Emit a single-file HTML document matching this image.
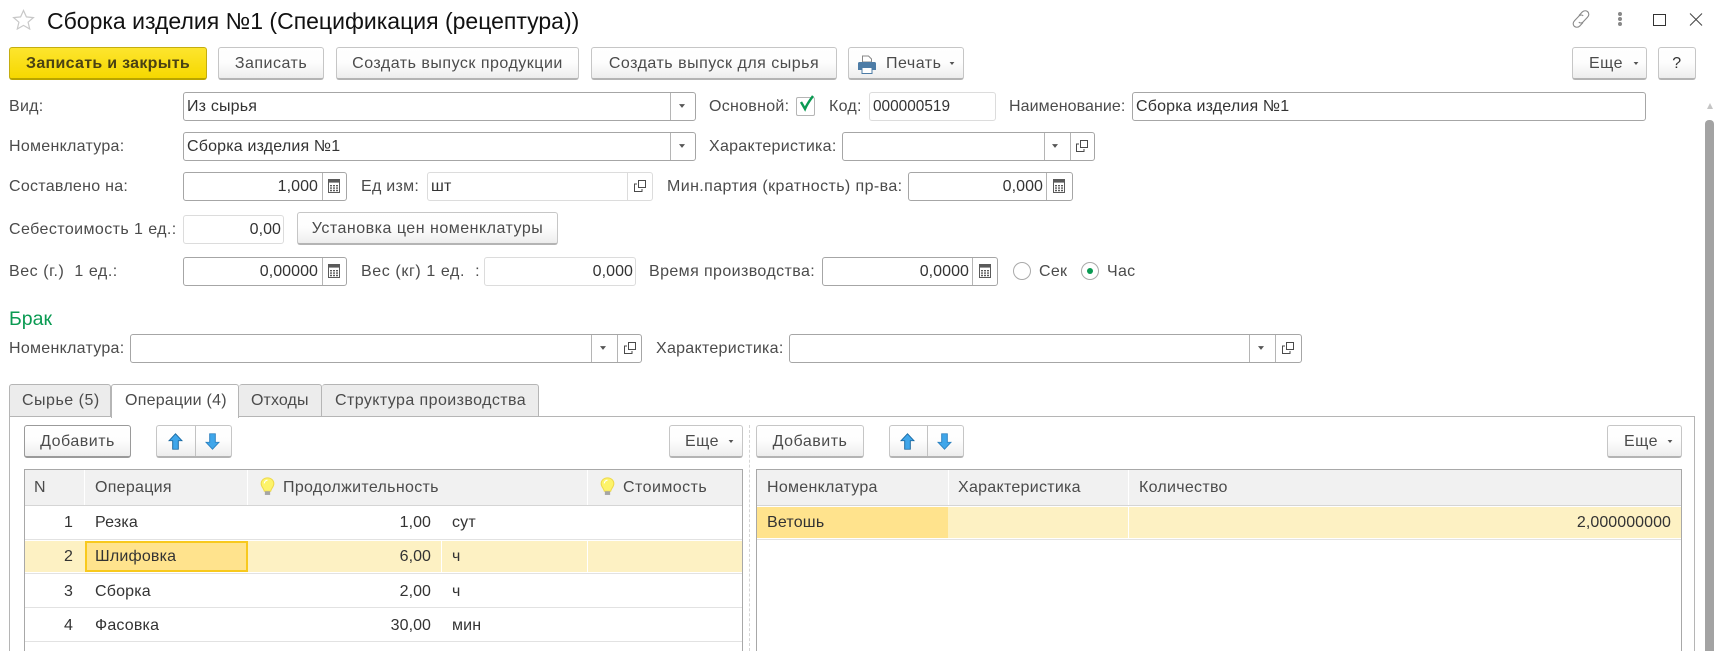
<!DOCTYPE html>
<html lang="ru"><head><meta charset="utf-8"><title>Сборка изделия №1</title>
<style>
html,body{margin:0;padding:0;width:1714px;height:651px;overflow:hidden;background:#fff}
body{position:relative;font-family:"Liberation Sans",Arial,sans-serif;font-size:16px;letter-spacing:.28px;color:#4b4b4b}
.a,.l,.f,.b,.t,.c,svg{position:absolute}
.l,.t{white-space:nowrap;line-height:22px;height:22px}
.t{color:#333;letter-spacing:.18px}
.t.r{letter-spacing:.06px}
.r{text-align:right}
.f{box-sizing:border-box;height:29px;background:#fff;border:1px solid #a6a6a6;border-radius:3px}
.f.lt{border-color:#dcdcdc}
.f i{position:absolute;top:0;bottom:0;width:1px;background:#b5b5b5}
.f.lt i{background:#dcdcdc}
.b{box-sizing:border-box;height:33px;top:47px;border:1px solid #c6c6c6;border-bottom:2px solid #b4b4b4;border-radius:3px;background:linear-gradient(#fff 0,#fdfdfd 50%,#ededed 100%);text-align:center;line-height:32px;white-space:nowrap;color:#4b4b4b;letter-spacing:.5px}
.y{background:linear-gradient(#fde52e,#f6d800);border:1px solid #c4ad10;border-bottom:2px solid #b9a400;font-weight:bold;color:#4a4213;letter-spacing:.3px}
.tab{position:absolute;box-sizing:border-box;top:384px;height:33px;background:#ececec;border:1px solid #b5b5b5;border-left:0;border-radius:3px 3px 0 0;line-height:31px;color:#4b4b4b;white-space:nowrap;letter-spacing:.42px}
.h{position:absolute;background:#e2e2e2;height:1px}
.hd{position:absolute;background:#f1f1f1;height:35px;top:470px}
.v{position:absolute;background:#fff;width:1px}
</style></head><body>
<svg width="0" height="0" style="left:0;top:0"><defs>
<symbol id="calc" viewBox="0 0 12 14"><rect x=".5" y=".5" width="11" height="13" fill="#fff" stroke="#5a5a5a"/><rect x="0" y="0" width="12" height="3.6" fill="#5a5a5a"/><path d="M2 6h2v1.4H2zM5 6h2v1.4H5zM8 6h2v1.4H8zM2 8.4h2v1.4H2zM5 8.4h2v1.4H5zM8 8.4h2v1.4H8zM2 10.8h2v1.4H2zM5 10.8h2v1.4H5zM8 10.8h2v1.4H8z" fill="#5a5a5a"/></symbol>
<symbol id="copy" viewBox="0 0 12 12"><path d="M4.5.5h7v7h-7z M3 4H.5v7.500H8V9" fill="none" stroke="#4a4a4a"/></symbol>
<symbol id="dd" viewBox="0 0 8 5"><path d="M0 0h8L4 5z" fill="#555"/></symbol>
<symbol id="up" viewBox="0 0 16 22"><path d="M8 1L15 10H11V21H5V10H1z" fill="#3fa6ea" stroke="#16669f"/></symbol>
<symbol id="dn" viewBox="0 0 16 22"><path d="M5 1H11V12H15L8 21 1 12H5z" fill="#3fa6ea" stroke="#2a7fbe"/></symbol>
<symbol id="bulb" viewBox="0 0 14 18"><path d="M7 .8C3.3.8 1 3.4 1 6.4c0 2.8 2.4 4.200 3 7.100h6c.6-2.900 3-4.300 3-7.100C13 3.400 10.700.8 7 .8z" fill="#fdf36a" stroke="#eed94a"/><path d="M4 6a3 3 0 013-3" stroke="#fff" fill="none"/><rect x="4.500" y="13.500" width="5" height="3.500" fill="#a5a5a5"/></symbol>
</defs></svg>

<svg style="left:12px;top:9px" width="23" height="21" viewBox="0 0 23 21"><path d="M11.500 1.500l2.900 6.400 7 .7-5.300 4.600 1.600 6.800-6.200-3.600-6.200 3.600 1.600-6.800L1.600 8.600l7-.7z" fill="#fff" stroke="#c8c8c8" stroke-width="1.200"/></svg>
<div class="l" style="left:47px;top:7px;height:28px;line-height:28px;font-size:23px;letter-spacing:0;color:#111">Сборка изделия №1 (Спецификация (рецептура))</div>

<svg style="left:1570px;top:8px" width="22" height="22" viewBox="0 0 22 22"><g fill="none" stroke="#888" stroke-width="1.100"><path d="M9 7.500l3-3.300c2-2 4.500-1.700 5.800-.4 1.300 1.300 1.500 3.600-.3 5.500l-4.500 4.700c-1.500 1.400-3.200 1.200-4.200.1"/><path d="M13 14.500l-3 3.300c-2 2-4.500 1.700-5.800.4-1.300-1.300-1.500-3.600.3-5.500l4.500-4.700c1.500-1.400 3.200-1.200 4.200-.1"/></g></svg>
<svg style="left:1617px;top:11px" width="6" height="16"><circle cx="3" cy="3" r="2" fill="#888"/><circle cx="3" cy="8" r="2" fill="#888"/><circle cx="3" cy="13" r="2" fill="#888"/></svg>
<div class="a" style="left:1653px;top:14px;width:11px;height:10px;border:1px solid #333"></div>
<svg style="left:1689px;top:13px" width="14" height="13"><path d="M1 .5l12 12M13 .5L1 12.500" stroke="#444" fill="none"/></svg>

<div class="b y" style="left:9px;width:198px">Записать и закрыть</div>
<div class="b" style="left:218px;width:106px">Записать</div>
<div class="b" style="left:336px;width:243px">Создать выпуск продукции</div>
<div class="b" style="left:591px;width:246px">Создать выпуск для сырья</div>
<div class="b" style="left:848px;width:116px;text-align:left;padding-left:37px">Печать</div>
<svg style="left:857px;top:55px" width="20" height="19" viewBox="0 0 20 19"><path d="M5.500 7V1h6l3 3v3z" fill="#fff" stroke="#888"/><path d="M1 8.500c0-1 .6-1.500 1.500-1.500h15c.9 0 1.500.5 1.500 1.500V15h-4v-3H5v3H1z" fill="#4d7ca6"/><rect x="5" y="12.500" width="10" height="6" fill="#fff" stroke="#4d7ca6"/></svg>
<svg style="left:949px;top:62px" width="6" height="3"><use href="#dd"/></svg>
<div class="b" style="left:1572px;width:75px;text-align:left;padding-left:16px">Еще</div>
<svg style="left:1633px;top:62px" width="6" height="3"><use href="#dd"/></svg>
<div class="b" style="left:1658px;width:38px;color:#333">?</div>

<!-- row 1 -->
<div class="l" style="left:9px;top:96px">Вид:</div>
<div class="f" style="left:183px;top:92px;width:513px"><i style="left:486px"></i></div>
<div class="t" style="left:187px;top:96px">Из сырья</div>
<svg style="left:679px;top:104px" width="6" height="4"><use href="#dd"/></svg>
<div class="l" style="left:709px;top:96px">Основной:</div>
<div class="a" style="left:796px;top:97px;width:17px;height:17px;border:1px solid #b5b5b5;border-radius:2px"></div>
<svg style="left:798px;top:94px" width="18" height="18"><path d="M3 8l4 7c2-5 5-9 8-13" stroke="#0a9a52" stroke-width="2.400" fill="none"/></svg>
<div class="l" style="left:829px;top:96px">Код:</div>
<div class="f lt" style="left:869px;top:92px;width:127px"></div>
<div class="t" style="left:873px;top:96px;font-size:15.4px;letter-spacing:0">000000519</div>
<div class="l" style="left:1009px;top:96px;letter-spacing:.08px">Наименование:</div>
<div class="f" style="left:1132px;top:92px;width:514px"></div>
<div class="t" style="left:1136px;top:96px">Сборка изделия №1</div>

<!-- row 2 -->
<div class="l" style="left:9px;top:136px">Номенклатура:</div>
<div class="f" style="left:183px;top:132px;width:513px"><i style="left:486px"></i></div>
<div class="t" style="left:187px;top:136px">Сборка изделия №1</div>
<svg style="left:679px;top:144px" width="6" height="4"><use href="#dd"/></svg>
<div class="l" style="left:709px;top:136px">Характеристика:</div>
<div class="f" style="left:842px;top:132px;width:253px"><i style="left:201px"></i><i style="left:227px"></i></div>
<svg style="left:1052px;top:144px" width="6" height="4"><use href="#dd"/></svg>
<svg style="left:1076px;top:140px" width="12" height="12"><use href="#copy"/></svg>

<!-- row 3 -->
<div class="l" style="left:9px;top:176px">Составлено на:</div>
<div class="f" style="left:183px;top:172px;width:164px"><i style="left:138px"></i></div>
<div class="t r" style="left:183px;top:176px;width:135px">1,000</div>
<svg style="left:328px;top:179px" width="12" height="14"><use href="#calc"/></svg>
<div class="l" style="left:361px;top:176px">Ед изм:</div>
<div class="f lt" style="left:427px;top:172px;width:226px"><i style="left:199px"></i></div>
<div class="t" style="left:431px;top:176px">шт</div>
<svg style="left:634px;top:180px" width="12" height="12"><use href="#copy"/></svg>
<div class="l" style="left:667px;top:176px;letter-spacing:.4px">Мин.партия (кратность) пр-ва:</div>
<div class="f" style="left:908px;top:172px;width:165px"><i style="left:137px"></i></div>
<div class="t r" style="left:908px;top:176px;width:135px">0,000</div>
<svg style="left:1053px;top:179px" width="12" height="14"><use href="#calc"/></svg>

<!-- row 4 -->
<div class="l" style="left:9px;top:219px;letter-spacing:.42px">Себестоимость 1 ед.:</div>
<div class="f lt" style="left:183px;top:215px;width:101px"></div>
<div class="t r" style="left:183px;top:219px;width:98px">0,00</div>
<div class="b" style="left:297px;top:212px;width:261px">Установка цен номенклатуры</div>

<!-- row 5 -->
<div class="l" style="left:9px;top:261px;letter-spacing:.55px">Вес (г.)&nbsp; 1 ед.:</div>
<div class="f" style="left:183px;top:257px;width:164px"><i style="left:138px"></i></div>
<div class="t r" style="left:183px;top:261px;width:135px">0,00000</div>
<svg style="left:328px;top:264px" width="12" height="14"><use href="#calc"/></svg>
<div class="l" style="left:361px;top:261px;letter-spacing:.6px">Вес (кг) 1 ед.&nbsp; :</div>
<div class="f lt" style="left:484px;top:257px;width:152px"></div>
<div class="t r" style="left:484px;top:261px;width:149px">0,000</div>
<div class="l" style="left:649px;top:261px;letter-spacing:.4px">Время производства:</div>
<div class="f" style="left:822px;top:257px;width:176px"><i style="left:149px"></i></div>
<div class="t r" style="left:822px;top:261px;width:147px">0,0000</div>
<svg style="left:979px;top:264px" width="12" height="14"><use href="#calc"/></svg>
<svg style="left:1013px;top:262px" width="18" height="18"><circle cx="9" cy="9" r="8.500" fill="#fff" stroke="#aaa"/></svg>
<div class="l" style="left:1039px;top:261px">Сек</div>
<svg style="left:1081px;top:262px" width="18" height="18"><circle cx="9" cy="9" r="8.500" fill="#fff" stroke="#aaa"/><circle cx="9" cy="9" r="3" fill="#0a9a52"/></svg>
<div class="l" style="left:1107px;top:261px">Час</div>

<!-- brak -->
<div class="l" style="left:9px;top:308px;font-size:19.500px;letter-spacing:0;color:#0a9a52">Брак</div>
<div class="l" style="left:9px;top:338px">Номенклатура:</div>
<div class="f" style="left:130px;top:334px;width:512px"><i style="left:460px"></i><i style="left:486px"></i></div>
<svg style="left:600px;top:346px" width="6" height="4"><use href="#dd"/></svg>
<svg style="left:624px;top:342px" width="12" height="12"><use href="#copy"/></svg>
<div class="l" style="left:656px;top:338px">Характеристика:</div>
<div class="f" style="left:789px;top:334px;width:513px"><i style="left:459px"></i><i style="left:485px"></i></div>
<svg style="left:1258px;top:346px" width="6" height="4"><use href="#dd"/></svg>
<svg style="left:1282px;top:342px" width="12" height="12"><use href="#copy"/></svg>

<!-- tabs -->
<div class="a" style="left:9px;top:416px;width:1686px;height:240px;box-sizing:border-box;border:1px solid #b5b5b5;background:#fff"></div>
<div class="tab" style="left:9px;width:102px;border-left:1px solid #b5b5b5;padding-left:12px;letter-spacing:.5px">Сырье (5)</div>
<div class="tab" style="left:111px;width:128px;background:#fff;border-bottom:0;border-left:1px solid #b5b5b5;height:34px;padding-left:13px;letter-spacing:.25px">Операции (4)</div>
<div class="tab" style="left:239px;width:83px;padding-left:12px;letter-spacing:.1px">Отходы</div>
<div class="tab" style="left:322px;width:217px;padding-left:13px">Структура производства</div>

<!-- toolbars -->
<div class="b" style="left:24px;top:425px;width:107px;border-color:#9a9a9a">Добавить</div>
<div class="b" style="left:156px;top:425px;width:76px"></div>
<div class="a" style="left:195px;top:426px;width:1px;height:30px;background:#c2c2c2"></div>
<svg style="left:168px;top:433px" width="15" height="17" viewBox="0 0 16 22" preserveAspectRatio="none"><use href="#up"/></svg>
<svg style="left:205px;top:433px" width="15" height="17" viewBox="0 0 16 22" preserveAspectRatio="none"><use href="#dn"/></svg>
<div class="b" style="left:669px;top:425px;width:74px;text-align:left;padding-left:15px">Еще</div>
<svg style="left:728px;top:440px" width="6" height="3"><use href="#dd"/></svg>
<div class="a" style="left:749px;top:425px;height:226px;border-left:1px dashed #d5d5d5"></div>
<div class="b" style="left:756px;top:425px;width:108px">Добавить</div>
<div class="b" style="left:889px;top:425px;width:75px"></div>
<div class="a" style="left:927px;top:426px;width:1px;height:30px;background:#c2c2c2"></div>
<svg style="left:900px;top:433px" width="15" height="17" viewBox="0 0 16 22" preserveAspectRatio="none"><use href="#up"/></svg>
<svg style="left:937px;top:433px" width="15" height="17" viewBox="0 0 16 22" preserveAspectRatio="none"><use href="#dn"/></svg>
<div class="b" style="left:1607px;top:425px;width:75px;text-align:left;padding-left:16px">Еще</div>
<svg style="left:1667px;top:440px" width="6" height="3"><use href="#dd"/></svg>

<!-- left table -->
<div class="a" style="left:24px;top:469px;width:719px;height:190px;box-sizing:border-box;border:1px solid #a8a8a8;background:#fff"></div>
<div class="hd" style="left:25px;width:717px"></div>
<div class="v" style="left:84px;top:470px;height:35px"></div>
<div class="v" style="left:247px;top:470px;height:35px"></div>
<div class="v" style="left:587px;top:470px;height:35px"></div>
<div class="h" style="left:25px;top:505px;width:717px;background:#d5d5d5"></div>
<div class="h" style="left:25px;top:539px;width:717px"></div>
<div class="h" style="left:25px;top:573px;width:717px"></div>
<div class="h" style="left:25px;top:607px;width:717px"></div>
<div class="h" style="left:25px;top:641px;width:717px"></div>
<div class="a" style="left:25px;top:541px;width:717px;height:31px;background:#fdf1c3"></div>
<div class="a" style="left:85px;top:541px;width:163px;height:31px;box-sizing:border-box;background:#ffe38d;border:2px solid #f8c91d"></div>
<div class="v" style="left:441px;top:541px;height:31px"></div>
<div class="v" style="left:587px;top:541px;height:31px"></div>
<div class="l" style="left:34px;top:477px">N</div>
<div class="l" style="left:95px;top:477px">Операция</div>
<svg style="left:260px;top:477px" width="15" height="19"><use href="#bulb"/></svg>
<div class="l" style="left:283px;top:477px;letter-spacing:.32px">Продолжительность</div>
<svg style="left:600px;top:477px" width="15" height="19"><use href="#bulb"/></svg>
<div class="l" style="left:623px;top:477px;letter-spacing:.45px">Стоимость</div>

<div class="t r" style="left:30px;top:512px;width:43px">1</div><div class="t" style="left:95px;top:512px">Резка</div><div class="t r" style="left:300px;top:512px;width:131px">1,00</div><div class="t" style="left:452px;top:512px">сут</div>
<div class="t r" style="left:30px;top:546px;width:43px">2</div><div class="t" style="left:95px;top:546px">Шлифовка</div><div class="t r" style="left:300px;top:546px;width:131px">6,00</div><div class="t" style="left:452px;top:546px">ч</div>
<div class="t r" style="left:30px;top:581px;width:43px">3</div><div class="t" style="left:95px;top:581px">Сборка</div><div class="t r" style="left:300px;top:581px;width:131px">2,00</div><div class="t" style="left:452px;top:581px">ч</div>
<div class="t r" style="left:30px;top:615px;width:43px">4</div><div class="t" style="left:95px;top:615px">Фасовка</div><div class="t r" style="left:300px;top:615px;width:131px">30,00</div><div class="t" style="left:452px;top:615px">мин</div>

<!-- right table -->
<div class="a" style="left:756px;top:469px;width:926px;height:190px;box-sizing:border-box;border:1px solid #a8a8a8;background:#fff"></div>
<div class="hd" style="left:757px;width:924px"></div>
<div class="v" style="left:948px;top:470px;height:35px"></div>
<div class="v" style="left:1128px;top:470px;height:35px"></div>
<div class="h" style="left:757px;top:505px;width:924px;background:#d5d5d5"></div>
<div class="a" style="left:757px;top:507px;width:924px;height:31px;background:#fdf1c3"></div>
<div class="a" style="left:757px;top:507px;width:191px;height:31px;background:#ffe38d"></div>
<div class="v" style="left:1128px;top:507px;height:31px"></div>
<div class="h" style="left:757px;top:539px;width:924px"></div>
<div class="l" style="left:767px;top:477px">Номенклатура</div>
<div class="l" style="left:958px;top:477px">Характеристика</div>
<div class="l" style="left:1139px;top:477px">Количество</div>
<div class="t" style="left:767px;top:512px">Ветошь</div>
<div class="t r" style="left:1400px;top:512px;width:271px">2,000000000</div>

<!-- scrollbar -->
<svg style="left:1707px;top:103px" width="6" height="6"><path d="M0 6L3 0l3 6z" fill="#c5c5c5"/></svg>
<div class="a" style="left:1705px;top:120px;width:9px;height:531px;background:#a3a3a3;border-radius:4px 4px 0 0"></div>
</body></html>
